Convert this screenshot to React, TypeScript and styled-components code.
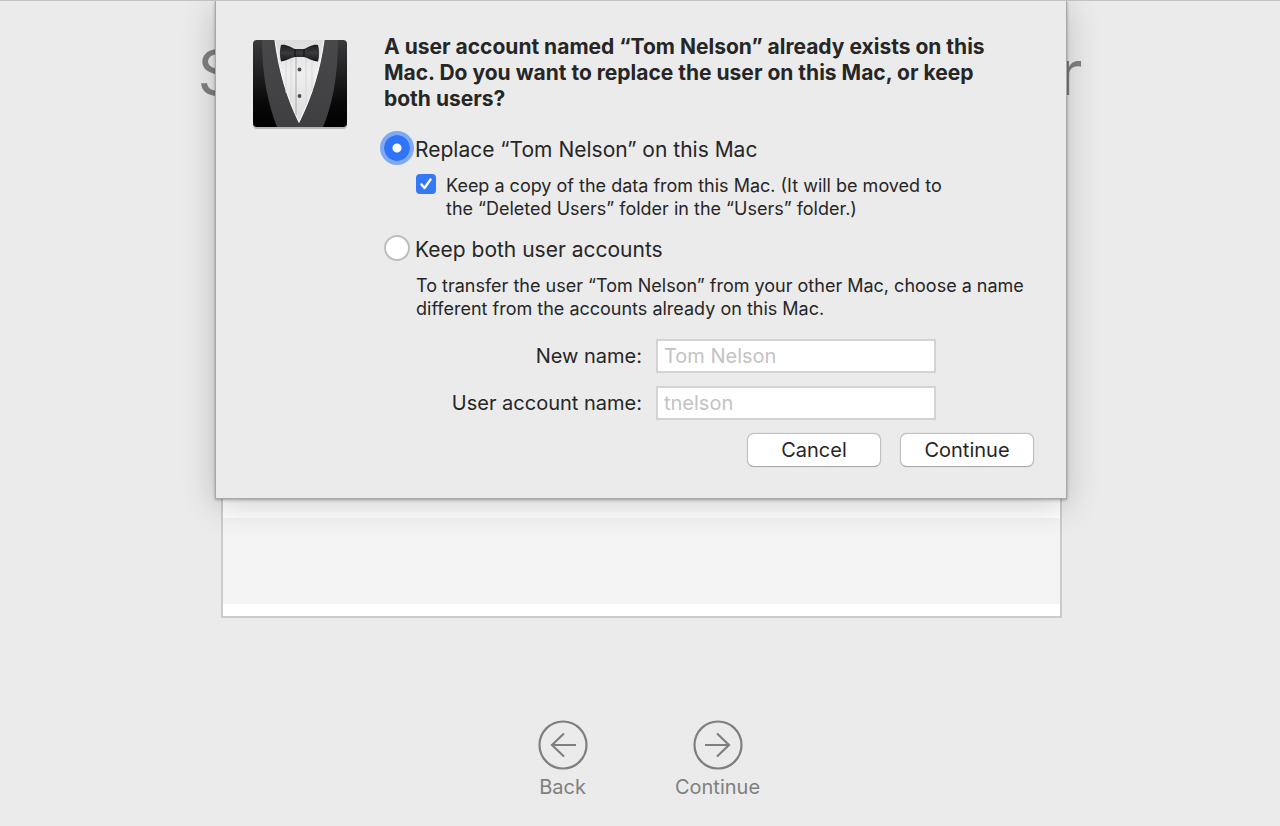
import React, { useState } from "react";
import styled, { createGlobalStyle } from "styled-components";

const GlobalStyle = createGlobalStyle`
  *, *::before, *::after { box-sizing: border-box; }
  body {
    margin: 0;
    background: #ebebeb;
    color: #262626;
    font-family: Inter, "Liberation Sans", sans-serif;
    -webkit-font-smoothing: antialiased;
  }
`;

const Page = styled.div`
  position: relative;
  min-height: 100vh;
  display: flex;
  flex-direction: column;
  align-items: center;
  border-top: 1px solid #c2c2c2;
  overflow: hidden;
`;

const Title = styled.h1`
  margin: 0;
  padding-top: 31px;
  font-size: 63px;
  line-height: 80px;
  font-weight: 400;
  color: #808080;
  white-space: nowrap;
`;

const Panel = styled.section`
  width: 66%;
  max-width: 841px;
  height: 481px;
  margin: 25px 0 0 3px;
  padding-bottom: 12px;
  display: flex;
  flex-direction: column;
  justify-content: flex-end;
  background: #fff;
  border: 2px solid #cbcbcb;
`;

const Stripe = styled.div`
  height: 86px;
  background: #f4f4f4;
`;

const Nav = styled.nav`
  display: flex;
  gap: 55px;
  margin-top: 102px;
  padding-bottom: 24px;
`;

const NavButton = styled.button`
  width: 100px;
  padding: 0;
  border: 0;
  background: none;
  display: flex;
  flex-direction: column;
  align-items: center;
  gap: 4px;
  font: inherit;
  font-size: 20px;
  line-height: 26px;
  color: #7f7f7f;

  svg { display: block; }
`;

const Overlay = styled.div`
  position: absolute;
  inset: 0 0 auto 2px;
  display: flex;
  justify-content: center;
`;

const Sheet = styled.form`
  width: 852px;
  max-width: 100%;
  padding: 33px 32px 31px 36px;
  display: flex;
  gap: 36px;
  background: #ebebeb;
  border: 1px solid #a8a8a8;
  border-top: 0;
  box-shadow: 0 6px 32px rgba(0, 0, 0, 0.2), 0 1px 3px rgba(0, 0, 0, 0.3);
`;

const AppIcon = styled.svg`
  flex: none;
  display: block;
  margin-top: 2px;
`;

const Body = styled.div`
  flex: 1;
  min-width: 0;
`;

const Heading = styled.h2`
  margin: 0 0 23px;
  font-size: 21px;
  line-height: 26px;
  font-weight: 700;
`;

const Choice = styled.label`
  display: flex;
  align-items: flex-start;
  gap: 5px;
  font-size: 21px;
  line-height: 30px;
`;

const Radio = styled.input`
  appearance: none;
  flex: none;
  width: 26px;
  height: 26px;
  margin: 0;
  border: 2px solid #bdbdbd;
  border-radius: 50%;
  background: #fff;

  &:checked {
    border: 0;
    background: radial-gradient(circle, #fff 4px, #2f74f6 5px);
    box-shadow: 0 0 0 4px #7eaaf3;
  }
`;

const SubChoice = styled.label`
  display: flex;
  gap: 10px;
  margin: 9px 0 15px 32px;
  font-size: 18px;
  line-height: 23px;
`;

const CheckWrap = styled.span`
  position: relative;
  flex: none;
  width: 20px;
  height: 20px;

  svg {
    position: absolute;
    inset: 0;
    pointer-events: none;
  }
`;

const Checkbox = styled.input`
  appearance: none;
  display: block;
  width: 20px;
  height: 20px;
  margin: 0;
  border: 1px solid #bdbdbd;
  border-radius: 4px;
  background: #fff;

  &:checked {
    border: 0;
    background: #3578f6;
  }
`;

const Note = styled.p`
  margin: 9px 0 19px 32px;
  font-size: 18px;
  line-height: 23px;
`;

const Field = styled.div`
  display: flex;
  align-items: center;
  justify-content: flex-end;
  gap: 14px;
  margin: 0 98px 13px 0;
  font-size: 20px;
`;

const TextInput = styled.input`
  width: 280px;
  height: 34px;
  padding: 0 6px;
  border: 2px solid #d3d3d3;
  border-radius: 0;
  background: #fff;
  font: inherit;
  font-size: 20px;

  &::placeholder {
    color: #c3c3c3;
    opacity: 1;
  }
`;

const Actions = styled.div`
  display: flex;
  justify-content: flex-end;
  gap: 19px;
`;

const PushButton = styled.button`
  width: 134px;
  height: 34px;
  padding: 0;
  border: 1px solid #c0c0c0;
  border-bottom-color: #a8a8a8;
  border-radius: 7px;
  background: #fff;
  box-shadow: 0 0 1px rgba(0, 0, 0, 0.25);
  font: inherit;
  font-size: 20px;
  color: #262626;
`;

function TuxedoIcon() {
  return (
    <AppIcon width="96" height="96" viewBox="0 0 96 96" aria-hidden="true">
      <defs>
        <linearGradient id="coat" x1="0" y1="0" x2="0" y2="1">
          <stop offset="0" stopColor="#3a3a3c" />
          <stop offset="0.7" stopColor="#0a0a0b" />
          <stop offset="1" stopColor="#000" />
        </linearGradient>
        <linearGradient id="lapel" x1="0" y1="0" x2="0" y2="1">
          <stop offset="0" stopColor="#48484b" />
          <stop offset="1" stopColor="#3f3f42" />
        </linearGradient>
        <linearGradient id="shirt" x1="0" y1="0" x2="0" y2="1">
          <stop offset="0" stopColor="#dcdcdc" />
          <stop offset="0.4" stopColor="#efefef" />
          <stop offset="1" stopColor="#dcdcdc" />
        </linearGradient>
        <linearGradient id="bow" x1="0" y1="0" x2="0" y2="1">
          <stop offset="0" stopColor="#1c1c1e" />
          <stop offset="0.5" stopColor="#3b3b3e" />
          <stop offset="1" stopColor="#161618" />
        </linearGradient>
        <clipPath id="frame">
          <rect x="1" y="4" width="94" height="87" rx="4" />
        </clipPath>
      </defs>
      <rect x="1" y="5" width="94" height="88" rx="4" fill="#000" opacity="0.22" />
      <g clipPath="url(#frame)">
        <rect x="1" y="4" width="94" height="87" fill="url(#coat)" />
        <path d="M10 4H86C86 40 80 70 71 91H25C16 68 10 40 10 4Z" fill="url(#lapel)" />
        <path d="M23 4H72C68 34 60 60 47 86C34 60 27 34 23 4Z" fill="url(#shirt)" />
        <path d="M23 4C27 34 34 60 47 86C60 60 68 34 72 4" fill="none" stroke="#f7f7f7" strokeWidth="1.2" />
        <path d="M34 22V57M39 22V67M54 22V69M60 22V56" stroke="#d4d4d4" strokeWidth="0.8" />
        <path d="M44 21V79" stroke="#9d9d9d" strokeWidth="0.8" />
        <path d="M29 9C33 7.500 39 11 43 13H52C56 11 62 7.500 66 9C67.500 14 67.500 20 66 25.500C60 25 56 22 52 21H43C38 22 34 25 29 25.500C27.500 20 27.500 14 29 9Z" fill="url(#bow)" />
        <path d="M43 13V21M52 13V21" stroke="#0c0c0d" strokeWidth="1" />
        <circle cx="47.500" cy="33.500" r="1.900" fill="#4a4a4a" />
        <circle cx="47.500" cy="60" r="1.900" fill="#4a4a4a" />
      </g>
    </AppIcon>
  );
}

function ArrowCircle({ forward = false }: { forward?: boolean }) {
  return (
    <svg width="50" height="50" viewBox="0 0 50 50" fill="none" stroke="#7f7f7f" strokeWidth="2.200" aria-hidden="true">
      <circle cx="25" cy="25" r="23.500" />
      <path d={forward ? "M12 25H36M24 13.500L36 25L24 36.500" : "M38 25H14M26 13.500L14 25L26 36.500"} />
    </svg>
  );
}

export default function App() {
  const [mode, setMode] = useState("replace");
  const [keepCopy, setKeepCopy] = useState(true);

  return (
    <>
      <GlobalStyle />
      <Page>
        <Title>Select Information to Transfer</Title>
        <Panel>
          <Stripe />
        </Panel>
        <Nav>
          <NavButton type="button">
            <ArrowCircle />
            Back
          </NavButton>
          <NavButton type="button">
            <ArrowCircle forward />
            Continue
          </NavButton>
        </Nav>
        <Overlay>
          <Sheet role="dialog" aria-labelledby="sheet-heading" onSubmit={(e) => e.preventDefault()}>
            <TuxedoIcon />
            <Body>
              <Heading id="sheet-heading">
                A user account named “Tom Nelson” already exists on this
                <br />
                Mac. Do you want to replace the user on this Mac, or keep
                <br />
                both users?
              </Heading>
              <Choice>
                <Radio type="radio" name="mode" checked={mode === "replace"} onChange={() => setMode("replace")} />
                Replace “Tom Nelson” on this Mac
              </Choice>
              <SubChoice>
                <CheckWrap>
                  <Checkbox type="checkbox" checked={keepCopy} onChange={(e) => setKeepCopy(e.target.checked)} />
                  {keepCopy && (
                    <svg width="20" height="20" viewBox="0 0 20 20" fill="none" stroke="#fff" strokeWidth="2.400" strokeLinecap="round" strokeLinejoin="round">
                      <path d="M5.500 10.500L8.500 14L14.500 5.500" />
                    </svg>
                  )}
                </CheckWrap>
                <span>
                  Keep a copy of the data from this Mac. (It will be moved to
                  <br />
                  the “Deleted Users” folder in the “Users” folder.)
                </span>
              </SubChoice>
              <Choice>
                <Radio type="radio" name="mode" checked={mode === "both"} onChange={() => setMode("both")} />
                Keep both user accounts
              </Choice>
              <Note>
                To transfer the user “Tom Nelson” from your other Mac, choose a name
                <br />
                different from the accounts already on this Mac.
              </Note>
              <Field>
                <label htmlFor="new-name">New name:</label>
                <TextInput id="new-name" placeholder="Tom Nelson" />
              </Field>
              <Field>
                <label htmlFor="account-name">User account name:</label>
                <TextInput id="account-name" placeholder="tnelson" />
              </Field>
              <Actions>
                <PushButton type="button">Cancel</PushButton>
                <PushButton type="submit">Continue</PushButton>
              </Actions>
            </Body>
          </Sheet>
        </Overlay>
      </Page>
    </>
  );
}
